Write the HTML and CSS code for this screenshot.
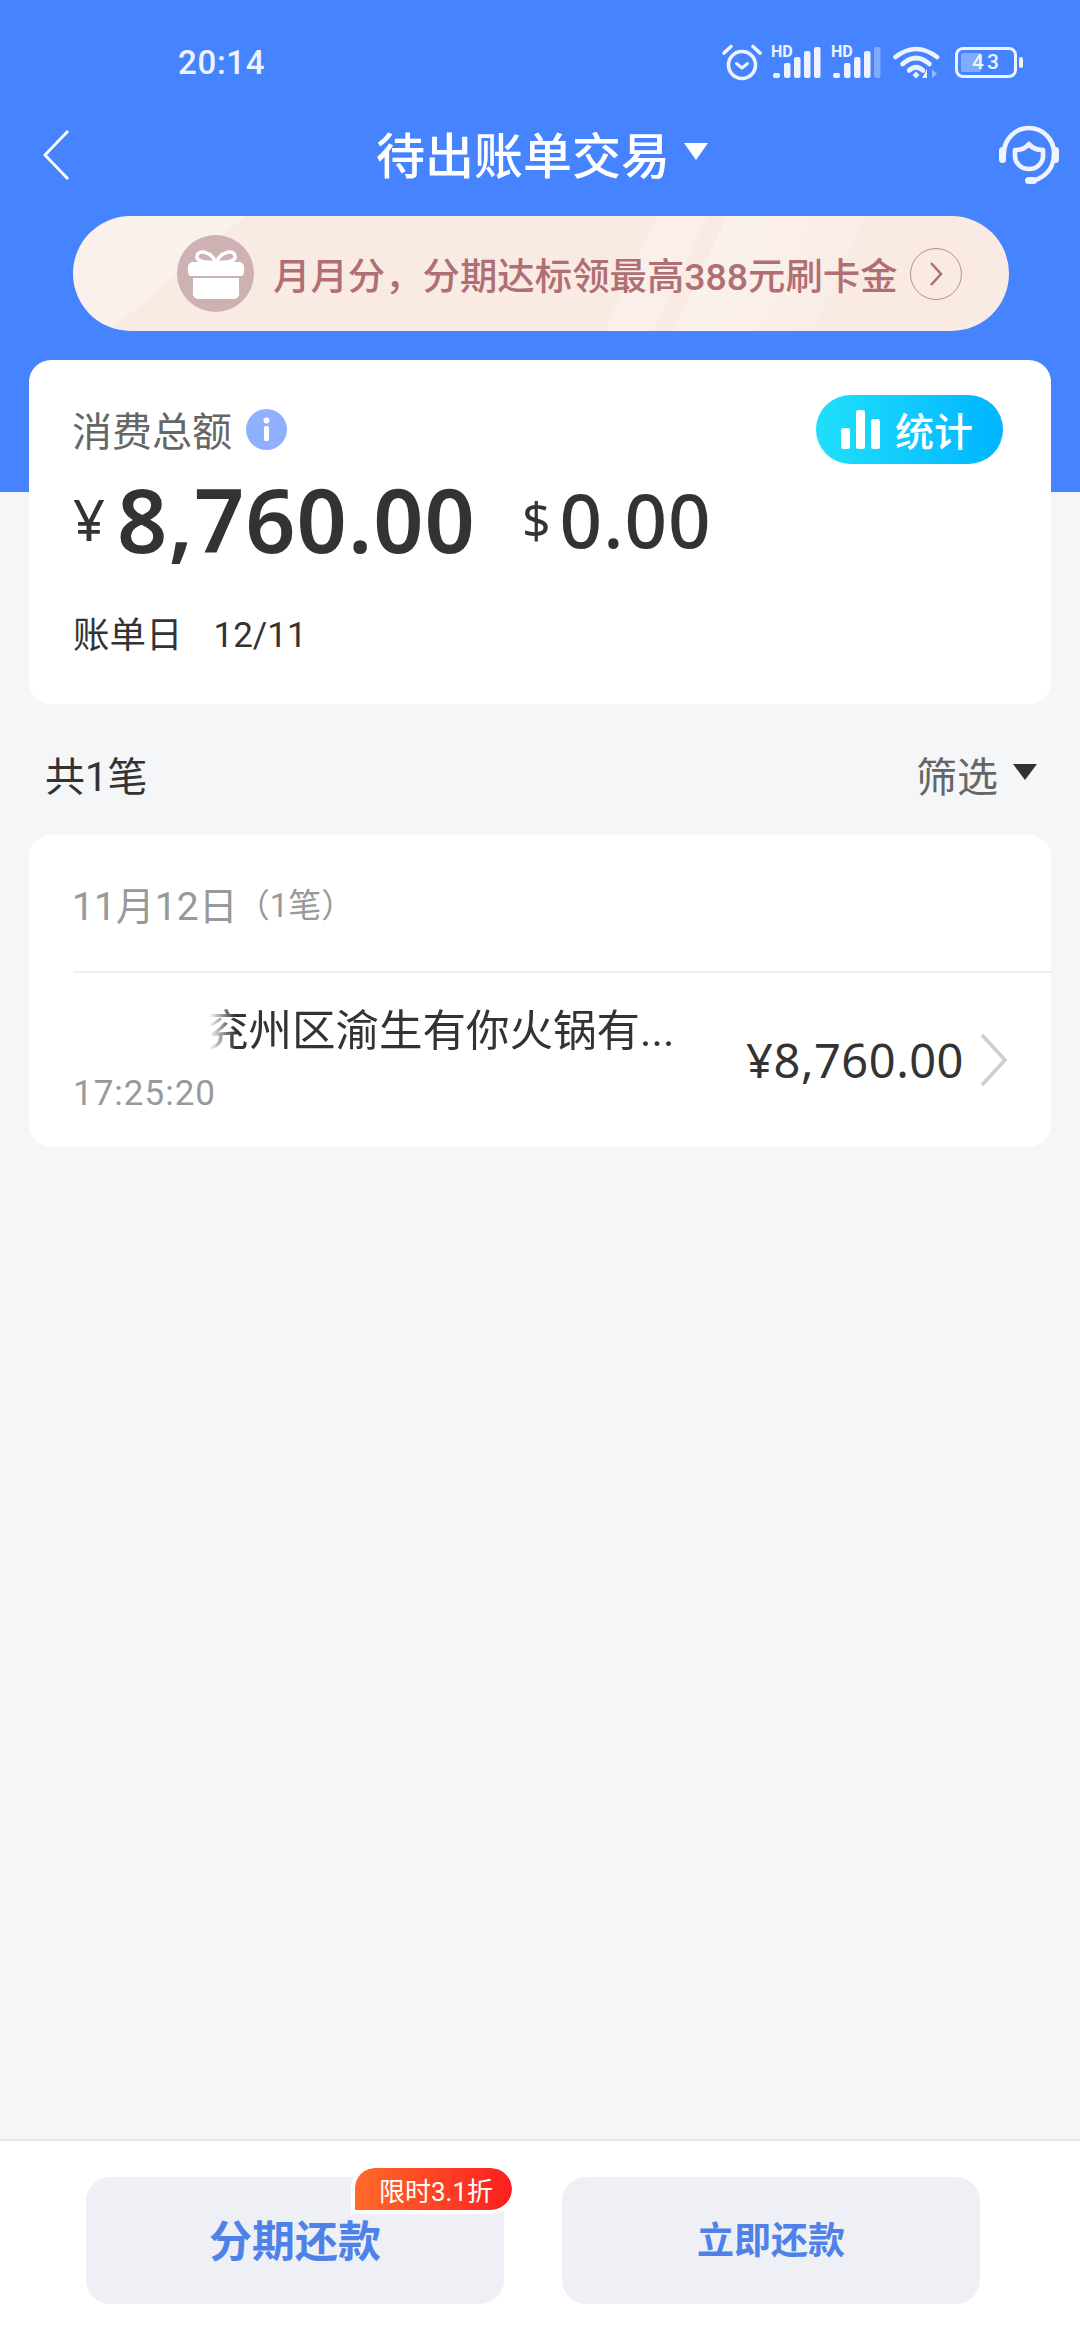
FILE: index.html
```html
<!DOCTYPE html>
<html lang="zh-CN">
<head>
<meta charset="utf-8">
<title>待出账单交易</title>
<link rel="stylesheet" href="styles.css">
</head>
<body>
<div class="page">
  <div class="status">
    <span class="clock">20:14</span>
    <div class="status-icons">
      <svg class="ic-alarm" viewBox="0 0 40 38" width="40" height="38" fill="none" stroke="#eef3ff" stroke-linecap="round" stroke-linejoin="round">
        <circle cx="20" cy="22" r="13.5" stroke-width="3.6"/>
        <path d="M2 10 L9 3.500 M38 10 L31 3.500" stroke-width="3.6"/>
        <path d="M14.500 20.500 L20 25 L25.500 20.500" stroke-width="3"/>
      </svg>
      <div class="signal">
        <span class="hd">HD</span>
        <svg viewBox="0 0 48 31" width="48" height="31" fill="#eef3ff">
          <rect x="0" y="26" width="7" height="5" rx="2"/><rect x="11" y="16" width="6.500" height="15" rx="2"/><rect x="21" y="10" width="6.500" height="21" rx="2"/><rect x="31" y="4" width="6.500" height="27" rx="2"/><rect x="41" y="0" width="6.500" height="31" rx="2"/>
        </svg>
      </div>
      <div class="signal">
        <span class="hd">HD</span>
        <svg viewBox="0 0 48 31" width="48" height="31" fill="#eef3ff">
          <rect x="0" y="26" width="7" height="5" rx="2"/><rect x="11" y="16" width="6.500" height="15" rx="2"/><rect x="21" y="10" width="6.500" height="21" rx="2"/><rect x="31" y="4" width="6.500" height="27" rx="2"/><rect x="41" y="0" width="6.500" height="31" rx="2" opacity=".35"/>
        </svg>
      </div>
      <svg class="ic-wifi" viewBox="0 0 47 34" width="47" height="34" fill="none" stroke="#eef3ff" stroke-width="4.600" stroke-linecap="round">
        <path d="M2.500 12 Q23 -4 44 12"/>
        <path d="M9.500 19 Q23 7 36.500 19"/>
        <path d="M16 25.500 Q23 19 30 25.500"/>
        <path d="M19.500 30 L23 26.500 L26.500 30 L23 33.500 Z" fill="#eef3ff" stroke="none"/>
        <path d="M34 24 L34 33 L29 33 Z" fill="#eef3ff" stroke="none"/>
        <path d="M39 24 L39 33 L44 29 Z" fill="#eef3ff" stroke="none" opacity=".5"/>
      </svg>
      <div class="battery">
        <div class="battery-body"><i class="battery-fill"></i><span>43</span></div>
        <i class="battery-tip"></i>
      </div>
    </div>
  </div>

  <div class="nav">
    <svg class="back" viewBox="0 0 26 50" width="26" height="50" fill="none" stroke="#fff" stroke-width="2.800"><path d="M25 1 L2 25 L25 49"/></svg>
    <h1 class="title">待出账单交易<i class="caret caret-white"></i></h1>
    <svg class="agent" viewBox="0 0 60 60" width="60" height="60" fill="none" stroke="#eef3ff" stroke-linecap="round" stroke-linejoin="round">
      <path d="M5 28 A25 25 0 0 1 55 28 C55 42 49 51 34 56" stroke-width="4.600"/>
      <path d="M30 19 C33 23 38 25 44 25 L44 31 C44 38 38 44 30 44 C22 44 16 38 16 31 L16 25 C22 25 27 23 30 19 Z" stroke-width="4.600"/>
      <rect x="0" y="22" width="7" height="16" rx="3.500" fill="#eef3ff" stroke="none"/>
      <rect x="53" y="22" width="7" height="16" rx="3.500" fill="#eef3ff" stroke="none"/>
      <rect x="26" y="52" width="12" height="7" rx="3.500" fill="#eef3ff" stroke="none"/>
    </svg>
  </div>

  <div class="promo">
    <span class="promo-gift">
      <svg viewBox="0 0 56 50" width="56" height="50" fill="#fff">
        <path d="M28 13 C22 2 10 0 9 7 C8 12 15 14 28 13 C41 14 48 12 47 7 C46 0 34 2 28 13 Z" fill="none" stroke="#fff" stroke-width="3.500"/>
        <rect x="0" y="13" width="56" height="15" rx="5"/>
        <rect x="5" y="24" width="46" height="26" rx="5"/>
        <rect x="0" y="27" width="56" height="2" fill="#cdb1b3"/>
      </svg>
    </span>
    <span class="promo-text">月月分，分期达标领最高388元刷卡金</span>
    <span class="promo-arrow">
      <svg viewBox="0 0 14 26" width="14" height="26" fill="none" stroke="#b06f73" stroke-width="2.600"><path d="M2 2 L12 13 L2 24"/></svg>
    </span>
  </div>

  <section class="card summary">
    <div class="summary-head">
      <div class="summary-label">
        <span>消费总额</span>
        <svg viewBox="0 0 41 41" width="41" height="41"><circle cx="20.500" cy="20.500" r="20.500" fill="#8fb0ff"/><circle cx="20.500" cy="11.500" r="3" fill="#fff"/><rect x="18" y="17" width="5" height="15" rx="1.500" fill="#fff"/></svg>
      </div>
      <div class="stats-btn">
        <svg viewBox="0 0 39 39" width="39" height="39" fill="#fff"><rect x="0" y="18" width="9" height="21" rx="2.500"/><rect x="15" y="0" width="9" height="39" rx="2.500"/><rect x="30" y="9" width="9" height="30" rx="2.500"/></svg>
        <span>统计</span>
      </div>
    </div>
    <div class="totals">
      <span class="cur cur-cny">¥</span><span class="total-main">8,760.00</span>
      <span class="cur cur-usd">$</span><span class="total-usd">0.00</span>
    </div>
    <div class="bill-day"><span>账单日</span><span class="bill-date">12/11</span></div>
  </section>

  <div class="list-head">
    <span class="count">共1笔</span>
    <span class="filter">筛选<i class="caret caret-dark"></i></span>
  </div>

  <section class="card records">
    <div class="day-row"><span class="day">11月12日</span><span class="day-count">（1笔）</span></div>
    <div class="record">
      <div class="record-info">
        <div class="merchant">兖州区渝生有你火锅有...</div>
        <div class="time">17:25:20</div>
      </div>
      <span class="record-amount">¥8,760.00</span>
      <svg class="record-go" viewBox="0 0 28 54" width="28" height="54" fill="none" stroke="#cfcfcf" stroke-width="3.600"><path d="M2 2 L25 27 L2 52"/></svg>
    </div>
  </section>

  <footer class="actions">
    <button class="action action-main">分期还款<span class="badge">限时3.1折</span></button>
    <button class="action action-now">立即还款</button>
  </footer>
</div>
</body>
</html>
```

FILE: styles.css
```css
* { box-sizing: border-box; }
html, body { margin: 0; padding: 0; }
body {
  font-family: Roboto, "Noto Sans CJK SC", sans-serif;
  color: #333;
}
i { display: block; }

.page {
  width: 1080px;
  height: 2340px;
  display: flex;
  flex-direction: column;
  background: linear-gradient(#4684ff 0 492px, #f5f6f8 492px);
  overflow: hidden;
}

/* status bar */
.status {
  height: 124px;
  padding: 0 57px 0 178px;
  display: flex;
  align-items: center;
  justify-content: space-between;
}
.clock { font-size: 33px; font-weight: 500; color: #eef3ff; letter-spacing: 0.7px; }
.status-icons { display: flex; align-items: center; }
.ic-alarm { margin-right: 11px; }
.signal { position: relative; width: 48px; height: 31px; margin-right: 12px; margin-top: 1px; }
.signal svg { display: block; }
.hd {
  position: absolute;
  left: -2px;
  top: -2px;
  font: 700 16px/14px Roboto, sans-serif;
  color: #eef3ff;
}
.ic-wifi { margin-right: 15px; }
.battery { display: flex; align-items: center; gap: 2px; }
.battery-body {
  position: relative;
  width: 62px;
  height: 31px;
  border: 3.500px solid #eef3ff;
  border-radius: 8px;
  display: flex;
  align-items: center;
  justify-content: center;
}
.battery-fill {
  position: absolute;
  left: 3px; top: 3px; bottom: 3px;
  width: 20px;
  background: rgba(238, 243, 255, .35);
  border-radius: 2px;
}
.battery-body span { position: relative; font-size: 21px; font-weight: 500; color: #eef3ff; letter-spacing: 3px; margin-right: -2px; }
.battery-tip { width: 4px; height: 11px; background: #eef3ff; border-radius: 2px; }

/* navigation */
.nav {
  height: 62px;
  margin-bottom: 30px;
  padding: 0 21px 0 43px;
  display: flex;
  align-items: center;
  justify-content: space-between;
}
.title {
  margin: -5px 0 0 16px;
  display: flex;
  align-items: center;
  gap: 14px;
  font-size: 49px;
  font-weight: 500;
  color: #fff;
}
.caret { width: 0; height: 0; border-style: solid; border-color: transparent; border-bottom-width: 0; }
.caret-white { border-width: 17px 12px 0; border-top-color: #fff; margin-top: -2px; }
.caret-dark { border-width: 16px 12px 0; border-top-color: #333; margin-top: -3px; }

/* promotion pill */
.promo {
  height: 115px;
  margin: 0 71px 29px 73px;
  padding: 0 47px 0 104px;
  display: flex;
  align-items: center;
  border-radius: 58px;
  background:
    linear-gradient(115deg, transparent 59%, rgba(255,255,255,.22) 59.200%, rgba(255,255,255,.22) 64%, transparent 64.200%),
    linear-gradient(115deg, transparent 66%, rgba(255,255,255,.3) 66.200%, rgba(255,255,255,.1) 80%, transparent 80.200%),
    linear-gradient(140deg, rgba(255,255,255,.3) 0 16%, transparent 16.200%),
    #f9ebe4;
}
.promo-gift {
  width: 77px;
  height: 77px;
  flex: none;
  display: flex;
  align-items: center;
  justify-content: center;
  border-radius: 50%;
  background: #cdb1b3;
}
.promo-text {
  margin-left: 19px;
  flex: 1;
  font-size: 37.400px;
  font-weight: 500;
  color: #b06f73;
  white-space: nowrap;
}
.promo-arrow {
  width: 52px;
  height: 52px;
  flex: none;
  display: flex;
  align-items: center;
  justify-content: center;
  border: 1.500px solid #c08c8e;
  border-radius: 50%;
}

/* cards */
.card { margin: 0 29px; background: #fff; border-radius: 22px; }

.summary { height: 344px; padding: 34px 48px 0 44px; }
.summary-head { height: 70px; display: flex; align-items: center; justify-content: space-between; }
.summary-label { display: flex; align-items: center; gap: 14px; font-size: 40px; color: #666; margin-left: -1px; }
.stats-btn {
  width: 187px;
  height: 69px;
  padding-left: 25px;
  display: flex;
  align-items: center;
  gap: 15px;
  border-radius: 35px;
  background: linear-gradient(90deg, #20e0fb, #00b4ff);
  color: #fff;
  font-size: 39px;
  font-weight: 500;
}
.totals { height: 100px; margin-top: 5px; display: flex; align-items: center; color: #333; white-space: nowrap; }
.cur { font-family: "Noto Sans", sans-serif; font-weight: 400; }
.cur-cny { font-size: 56px; margin-right: 12px; }
.cur-usd { font-size: 50px; margin-left: 46px; margin-right: 9px; }
.total-main { font: 600 88px/100px "Noto Sans", sans-serif; letter-spacing: 1px; }
.total-usd { font: 500 74.500px/100px "Noto Sans", sans-serif; letter-spacing: 1px; }
.bill-day { margin-top: 45px; display: flex; align-items: center; gap: 31px; font-size: 36.500px; line-height: 44px; color: #333; }
.bill-date { font-size: 35px; }

.list-head {
  height: 131px;
  padding: 8px 43px 0 45px;
  display: flex;
  align-items: center;
  justify-content: space-between;
}
.count { font-size: 40px; font-weight: 400; color: #333; }
.filter { display: flex; align-items: center; gap: 15px; font-size: 41px; color: #666; }

.records { height: 312px; display: flex; flex-direction: column; padding-left: 44px; }
.day-row { height: 138px; flex: none; display: flex; align-items: center; border-bottom: 2px solid #eeeeee; color: #999; }
.day { font-size: 39px; margin-left: -1px; }
.day-count { font-size: 33px; margin-left: -1px; }
.record { flex: 1; display: flex; align-items: center; padding-right: 43px; }
.record-info { flex: 1; min-width: 0; align-self: flex-start; }
.merchant {
  margin: 34px 0 0 132px;
  font-size: 43.500px;
  line-height: 50px;
  color: #333;
  white-space: nowrap;
  -webkit-mask-image: linear-gradient(90deg, transparent 4px, #000 30px);
  mask-image: linear-gradient(90deg, transparent 4px, #000 30px);
}
.time { margin-top: 17px; font-size: 35px; line-height: 40px; letter-spacing: 1px; color: #999; }
.record-amount { margin-right: 16px; font: 400 47px/1 "Noto Sans", sans-serif; letter-spacing: 0.500px; color: #333; }

/* bottom actions */
.actions {
  margin-top: auto;
  height: 201px;
  padding: 36px 100px 0 86px;
  display: flex;
  justify-content: space-between;
  background: #fff;
  border-top: 2px solid #e6e8ee;
}
.action {
  position: relative;
  height: 127px;
  padding: 0 0 6px;
  border: 0;
  border-radius: 24px;
  background: #eef0f6;
  color: #4f82e8;
  font-family: inherit;
  font-weight: 700;
}
.action-main { width: 418px; font-size: 43px; }
.action-now { width: 418px; font-size: 37px; }
.badge {
  position: absolute;
  left: 265px;
  top: -13px;
  width: 165px;
  height: 50px;
  padding-left: 24px;
  display: flex;
  align-items: center;
  border: 4px solid #fff;
  border-radius: 24px 25px 25px 0;
  background: linear-gradient(90deg, #ff6a2a, #fb1f1f);
  background-clip: padding-box;
  color: #fff;
  font-size: 26px;
  font-weight: 400;
  white-space: nowrap;
}
```
